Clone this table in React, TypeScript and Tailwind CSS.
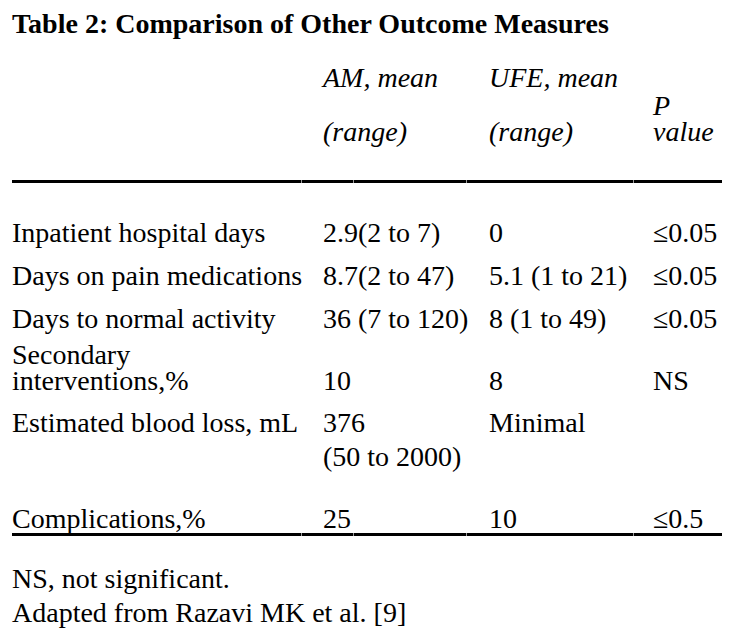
const rows = [
  { label: 'Inpatient hospital days', am: '2.9(2 to 7)', ufe: '0', p: '≤0.05' },
  { label: 'Days on pain medications', am: '8.7(2 to 47)', ufe: '5.1 (1 to 21)', p: '≤0.05' },
  { label: 'Days to normal activity', am: '36 (7 to 120)', ufe: '8 (1 to 49)', p: '≤0.05' },
]

// thick table rule, with the faint seams where the cells meet
function Rule() {
  return (
    <div className="flex h-[3px] w-[710px]">
      <div className="w-[289px] bg-black" />
      <div className="w-px bg-[#9a9a9a]" />
      <div className="w-[51px] bg-black" />
      <div className="w-px bg-[#9a9a9a]" />
      <div className="w-[112px] bg-black" />
      <div className="w-px bg-[#9a9a9a]" />
      <div className="w-[166px] bg-black" />
      <div className="w-px bg-[#9a9a9a]" />
      <div className="flex-1 bg-black" />
    </div>
  )
}

const grid = 'grid grid-cols-[311px_166px_164px_1fr]'

export default function App() {
  return (
    <div className="min-h-[641px] w-[733px] bg-white px-[12px] font-['Liberation_Serif','Times_New_Roman',serif] text-[28px] leading-[26px] text-black">
      <h1 className="pt-[10px] text-[28px] font-bold leading-[28px]">
        Table 2: Comparison of Other Outcome Measures
      </h1>

      <div className={`${grid} mt-[27px] items-end italic`}>
        <div />
        <div className="flex flex-col gap-[28px]">
          <span>AM, mean</span>
          <span>(range)</span>
        </div>
        <div className="flex flex-col gap-[28px]">
          <span>UFE, mean</span>
          <span>(range)</span>
        </div>
        <div className="flex flex-col">
          <span>P</span>
          <span>value</span>
        </div>
      </div>

      <div className="mt-[35px]">
        <Rule />
      </div>

      <div className="mt-[37px] flex flex-col gap-[17px]">
        {rows.map((r) => (
          <div key={r.label} className={grid}>
            <div className="whitespace-nowrap">{r.label}</div>
            <div className="whitespace-nowrap">{r.am}</div>
            <div className="whitespace-nowrap">{r.ufe}</div>
            <div className="whitespace-nowrap">{r.p}</div>
          </div>
        ))}
      </div>

      <div className={`${grid} mt-[10px] items-end`}>
        <div className="flex flex-col">
          <span>Secondary</span>
          <span>interventions,%</span>
        </div>
        <div>10</div>
        <div>8</div>
        <div>NS</div>
      </div>

      <div className={`${grid} mt-[16px]`}>
        <div className="whitespace-nowrap">Estimated blood loss, mL</div>
        <div className="flex flex-col gap-[8px]">
          <span>376</span>
          <span className="whitespace-nowrap">(50 to 2000)</span>
        </div>
        <div>Minimal</div>
        <div />
      </div>

      <div className={`${grid} mt-[36px]`}>
        <div>Complications,%</div>
        <div>25</div>
        <div>10</div>
        <div>≤0.5</div>
      </div>

      <div className="mt-[1px]">
        <Rule />
      </div>

      <div className="mt-[30px] flex flex-col gap-[8px]">
        <p>NS, not significant.</p>
        <p>Adapted from Razavi MK et al. [9]</p>
      </div>
    </div>
  )
}
